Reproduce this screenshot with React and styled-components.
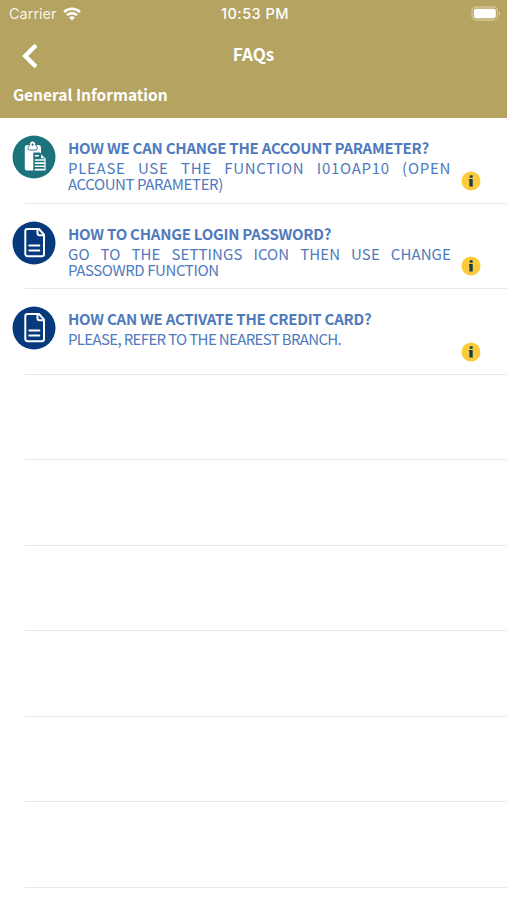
import React from 'react';
import styled, { createGlobalStyle } from 'styled-components';

const questions = [
  {
    icon: 'clipboard',
    title: 'HOW WE CAN CHANGE THE ACCOUNT PARAMETER?',
    lines: [
      { text: 'PLEASE USE THE FUNCTION I01OAP10 (OPEN', spacing: '0.7px', justify: true },
      { text: 'ACCOUNT PARAMETER)', spacing: '-0.4px' },
    ],
  },
  {
    icon: 'document',
    title: 'HOW TO CHANGE LOGIN PASSWORD?',
    lines: [
      { text: 'GO TO THE SETTINGS ICON THEN USE CHANGE', spacing: '0.1px', justify: true },
      { text: 'PASSOWRD FUNCTION', spacing: '-0.4px' },
    ],
  },
  {
    icon: 'document',
    title: 'HOW CAN WE ACTIVATE THE CREDIT CARD?',
    lines: [
      { text: 'PLEASE, REFER TO THE NEAREST BRANCH.', spacing: '-0.65px' },
    ],
  },
];

const emptyRows = [1, 2, 3, 4, 5, 6];

function ClipboardIcon() {
  return (
    <svg width="44" height="44" viewBox="0 0 44 44">
      <circle cx="22" cy="22" r="21.5" fill="#1d737c" />
      <path d="M15.500 10h10.500a3 3 0 0 1 3 3v22.500H15a2.200 2.200 0 0 1-2.200-2.200V12.700a2.700 2.700 0 0 1 2.700-2.700z" fill="#fff" />
      <path d="M16 13.500v-1a2.200 2.200 0 0 1 1.700-2.200 3.100 3.100 0 1 1 5.800 0 2.200 2.200 0 0 1 1.700 2.200v1a1.500 1.500 0 0 1-1.500 1.500h-6.200a1.500 1.500 0 0 1-1.500-1.500z" fill="#fff" stroke="#1d737c" strokeWidth="0.900" />
      <circle cx="20.600" cy="9.700" r="1.100" fill="#1d737c" />
      <path d="M21.300 17.500h6.700l5 5v13.200H21.300z" fill="#1d737c" />
      <path d="M29 19.300l4 4h-4z" fill="#fff" />
      <path d="M22.800 20.800h4.200M22.800 25h10M22.800 28.100h10M22.800 31.200h10M22.800 34.600h10" stroke="#fff" strokeWidth="1.600" />
      <path d="M33 23v12.500" stroke="#fff" strokeWidth="1.200" />
    </svg>
  );
}

function DocumentIcon() {
  return (
    <svg width="44" height="44" viewBox="0 0 44 44">
      <circle cx="22" cy="22" r="21.5" fill="#063a7c" />
      <g fill="none" stroke="#fff" strokeWidth="2" strokeLinejoin="round" strokeLinecap="round">
        <path d="M15.500 8h11.500l5 5.700V33a2.200 2.200 0 0 1-2.200 2.200H15.500a2.200 2.200 0 0 1-2.200-2.200V10.200A2.200 2.200 0 0 1 15.500 8z" />
        <path d="M25.500 8.500v3.800a2 2 0 0 0 2 2h4" />
        <path d="M17.300 24.500h10M17.300 29.500h10" />
      </g>
    </svg>
  );
}

function InfoIcon() {
  return (
    <svg width="20" height="20" viewBox="0 0 20 20">
      <circle cx="10" cy="10" r="9.500" fill="#fbcb3b" />
      <rect x="8.700" y="4.200" width="3" height="2.500" rx="0.500" fill="#173d49" />
      <path d="M8.300 8h3.400v7.500H8.400V9.400h-.6z" fill="#173d49" />
    </svg>
  );
}

function App() {
  return (
    <Screen>
      <GlobalStyle />
      <Header>
        <StatusBar>
          <Carrier>
            Carrier
            <svg width="18" height="14" viewBox="0 0 18 14">
              <g fill="none" stroke="#fff" strokeWidth="2.500">
                <path d="M1 5.100a11.500 11.500 0 0 1 16 0" />
                <path d="M4 8.200a7.200 7.200 0 0 1 10 0" />
              </g>
              <path d="M9 13.600L6 10.600a4.300 4.300 0 0 1 6 0z" fill="#fff" />
            </svg>
          </Carrier>
          <Time>10:53 PM</Time>
          <Battery>
            <svg width="30" height="16" viewBox="0 0 30 16">
              <rect x="1" y="1" width="25.500" height="13" rx="4" fill="none" stroke="#d3c698" strokeWidth="1.300" />
              <rect x="2.800" y="2.800" width="22" height="9.500" rx="2.300" fill="#fff" />
              <path d="M28 5.300a2.500 2.500 0 0 1 0 4.400z" fill="#d3c698" />
            </svg>
          </Battery>
        </StatusBar>
        <NavBar>
          <Back aria-label="Back">
            <svg width="18" height="26" viewBox="0 0 18 26">
              <path d="M15 2.200L4.200 13L15 23.800" fill="none" stroke="#fff" strokeWidth="4.400" />
            </svg>
          </Back>
          <PageTitle>FAQs</PageTitle>
        </NavBar>
        <Section>General Information</Section>
      </Header>
      <List>
        {questions.map((item) => (
          <Row key={item.title}>
            <RowIcon>
              {item.icon === 'clipboard' ? <ClipboardIcon /> : <DocumentIcon />}
            </RowIcon>
            <Content>
              <Question>{item.title}</Question>
              {item.lines.map((line) => (
                <Answer key={line.text} $spacing={line.spacing} $justify={line.justify}>
                  {line.text}
                </Answer>
              ))}
            </Content>
            <Info aria-label="Details"><InfoIcon /></Info>
          </Row>
        ))}
        {emptyRows.map((row) => <Row key={row} />)}
      </List>
    </Screen>
  );
}

const gold = '#b4a361';
const blue = '#4f7abd';

const GlobalStyle = createGlobalStyle`
  body {
    margin: 0;
    background-color: #fff;
    font-family: 'Noto Sans CJK SC', 'Noto Sans', sans-serif;
  }
`;

const Screen = styled.div`
  width: 100%;
  height: 900px;
  overflow: hidden;
  background-color: #fff;
`;

const Header = styled.header`
  height: 118.4px;
  box-sizing: border-box;
  background-color: ${gold};
  color: #fff;
`;

const StatusBar = styled.div`
  height: 27px;
  padding: 0 6px 0 9px;
  display: grid;
  grid-template-columns: 1fr auto 1fr;
  align-items: center;
  font-family: Inter, sans-serif;
  font-size: 14.5px;
`;

const Carrier = styled.div`
  display: flex;
  align-items: center;
  gap: 6px;
  color: #f6f2e4;
`;

const Time = styled.div`
  font-size: 14.5px;
  font-weight: 500;
  letter-spacing: 0.5px;
`;

const Battery = styled.div`
  display: flex;
  justify-content: flex-end;
`;

const NavBar = styled.div`
  height: 55px;
  padding: 0 21px;
  display: grid;
  grid-template-columns: 1fr auto 1fr;
  align-items: center;
`;

const Back = styled.button`
  padding: 3px 0 0;
  border: none;
  display: flex;
  background: none;
  cursor: pointer;
`;

const PageTitle = styled.h1`
  margin: 0;
  padding-bottom: 2px;
  font-size: 17px;
  line-height: 24px;
  font-weight: 700;
`;

const Section = styled.h2`
  margin: 0;
  padding-left: 13px;
  font-size: 15.5px;
  line-height: 24px;
  font-weight: 700;
`;

const List = styled.div`
  display: flex;
  flex-direction: column;
`;

const Row = styled.div`
  height: 85.5px;
  flex-shrink: 0;
  box-sizing: border-box;
  margin-left: 25px;
  border-bottom: 1px solid #e8e8ea;
  display: flex;
`;

const RowIcon = styled.div`
  width: 44px;
  height: 44px;
  margin: 17px 12px 0 -13px;
  flex-shrink: 0;
`;

const Content = styled.div`
  width: 383px;
  padding-top: 20px;
  flex-shrink: 0;
  color: ${blue};
  white-space: nowrap;
`;

const Question = styled.div`
  margin-bottom: 2px;
  font-size: 15px;
  line-height: 20px;
  font-weight: 700;
  letter-spacing: -0.25px;
`;

const Answer = styled.div`
  font-size: 15px;
  line-height: 16px;
  letter-spacing: ${(props) => props.$spacing};
  white-space: ${(props) => (props.$justify ? 'normal' : 'nowrap')};
  text-align-last: ${(props) => (props.$justify ? 'justify' : 'left')};
`;

const Info = styled.button`
  width: 20px;
  height: 20px;
  margin: 52.6px 0 0 10px;
  padding: 0;
  border: none;
  background: none;
  cursor: pointer;
`;

export default App;
